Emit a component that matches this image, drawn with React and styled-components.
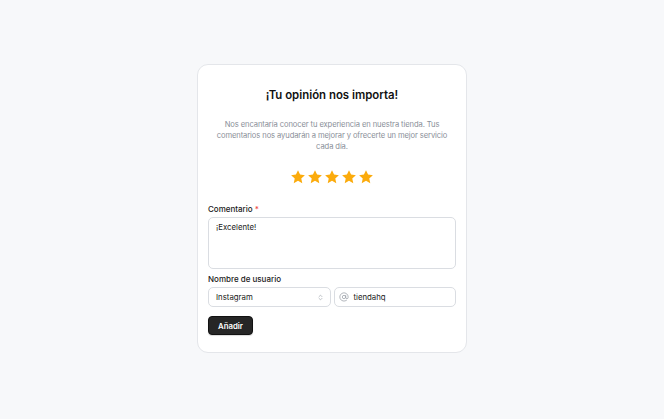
import React from "react";
import styled, { createGlobalStyle } from "styled-components";

const Global = createGlobalStyle`
  html, body { margin: 0; padding: 0; }
  body {
    background: #f7f8fa;
    font-family: Inter, "Noto Sans", sans-serif;
    -webkit-font-smoothing: antialiased;
  }
`;

const Page = styled.div`
  width: 664px;
  height: 419px;
  box-sizing: border-box;
  padding-top: 64px;
  display: flex;
  align-items: flex-start;
  justify-content: center;
`;

const Card = styled.div`
  width: 270px;
  box-sizing: border-box;
  background: #ffffff;
  border: 1px solid #e4e6ea;
  border-radius: 11px;
  padding: 22px 10px 17px;
  display: flex;
  flex-direction: column;
`;

const Title = styled.h1`
  margin: 0;
  text-align: center;
  font-size: 11.4px;
  line-height: 16px;
  font-weight: 600;
  color: #111111;
`;

const Description = styled.p`
  margin: 16px 6px 0;
  text-align: center;
  font-size: 7.6px;
  letter-spacing: -0.1px;
  line-height: 11px;
  color: #8a8f98;
`;

const Stars = styled.div`
  display: flex;
  justify-content: center;
  gap: 1px;
  margin-top: 17px;
  height: 16px;
`;

const Field = styled.div`
  display: flex;
  flex-direction: column;
  gap: 2px;
  margin-top: ${(p) => p.$mt}px;
`;

const Label = styled.label`
  font-size: 8px;
  line-height: 11px;
  font-weight: 500;
  color: #1a1a1a;
`;

const Req = styled.span`
  color: #ef4444;
`;

const TextArea = styled.textarea`
  display: block;
  box-sizing: border-box;
  height: 52px;
  width: 100%;
  margin: 0;
  resize: none;
  border: 1px solid #dadde2;
  border-radius: 5px;
  padding: 4px 7px;
  font-family: inherit;
  font-size: 7.8px;
  line-height: 11px;
  color: #1a1a1a;
  outline: none;
`;

const Row = styled.div`
  display: grid;
  grid-template-columns: 1fr 1fr;
  gap: 3px;
`;

const Control = styled.div`
  box-sizing: border-box;
  height: 20px;
  border: 1px solid #dadde2;
  border-radius: 5px;
  display: flex;
  align-items: center;
  padding: ${(p) => (p.$icon ? "0 6px 0 4px" : "0 6px 0 7px")};
  gap: 5px;
  font-size: 7.8px;
  color: #1a1a1a;
`;

const Grow = styled.span`
  flex: 1;
`;

const Button = styled.button`
  align-self: flex-start;
  margin-top: 9px;
  height: 19px;
  padding: 0 9px;
  box-sizing: border-box;
  background: #262626;
  border: 1px solid #111;
  border-radius: 4px;
  color: #fff;
  font-family: inherit;
  font-size: 7.8px;
  font-weight: 600;
  box-shadow: 0 1px 1px rgba(0,0,0,0.15);
`;

const Star = () => (
  <svg width="16" height="16" viewBox="0 0 24 24">
    <path
      d="M12 1.8l3.1 6.6 7.2.8-5.4 4.9 1.5 7.1L12 17.6l-6.4 3.6 1.5-7.1-5.4-4.9 7.2-.8z"
      fill="#fbab0c"
    />
  </svg>
);

const Chevrons = () => (
  <svg width="7" height="7" viewBox="0 0 24 24" fill="none" stroke="#9aa0a8" strokeWidth="2.2" strokeLinecap="round" strokeLinejoin="round">
    <path d="M7 9l5-5 5 5" />
    <path d="M7 15l5 5 5-5" />
  </svg>
);

const At = () => (
  <svg width="10" height="10" viewBox="0 0 24 24" fill="none" stroke="#a3a8b0" strokeWidth="2" strokeLinecap="round" strokeLinejoin="round">
    <circle cx="12" cy="12" r="4" />
    <path d="M16 8v5a3 3 0 0 0 6 0v-1a10 10 0 1 0-4 8" />
  </svg>
);

export default function App() {
  return (
    <>
      <Global />
      <Page>
        <Card>
          <Title>¡Tu opinión nos importa!</Title>
          <Description>
            Nos encantaría conocer tu experiencia en nuestra tienda. Tus comentarios nos ayudarán a mejorar y ofrecerte un mejor servicio cada día.
          </Description>
          <Stars>
            {[0, 1, 2, 3, 4].map((i) => (
              <Star key={i} />
            ))}
          </Stars>
          <Field $mt={19}>
            <Label>
              Comentario <Req>*</Req>
            </Label>
            <TextArea defaultValue="¡Excelente!" />
          </Field>
          <Field $mt={5}>
            <Label>Nombre de usuario</Label>
            <Row>
              <Control>
                <Grow>Instagram</Grow>
                <Chevrons />
              </Control>
              <Control $icon>
                <At />
                <span>tiendahq</span>
              </Control>
            </Row>
          </Field>
          <Button>Añadir</Button>
        </Card>
      </Page>
    </>
  );
}
